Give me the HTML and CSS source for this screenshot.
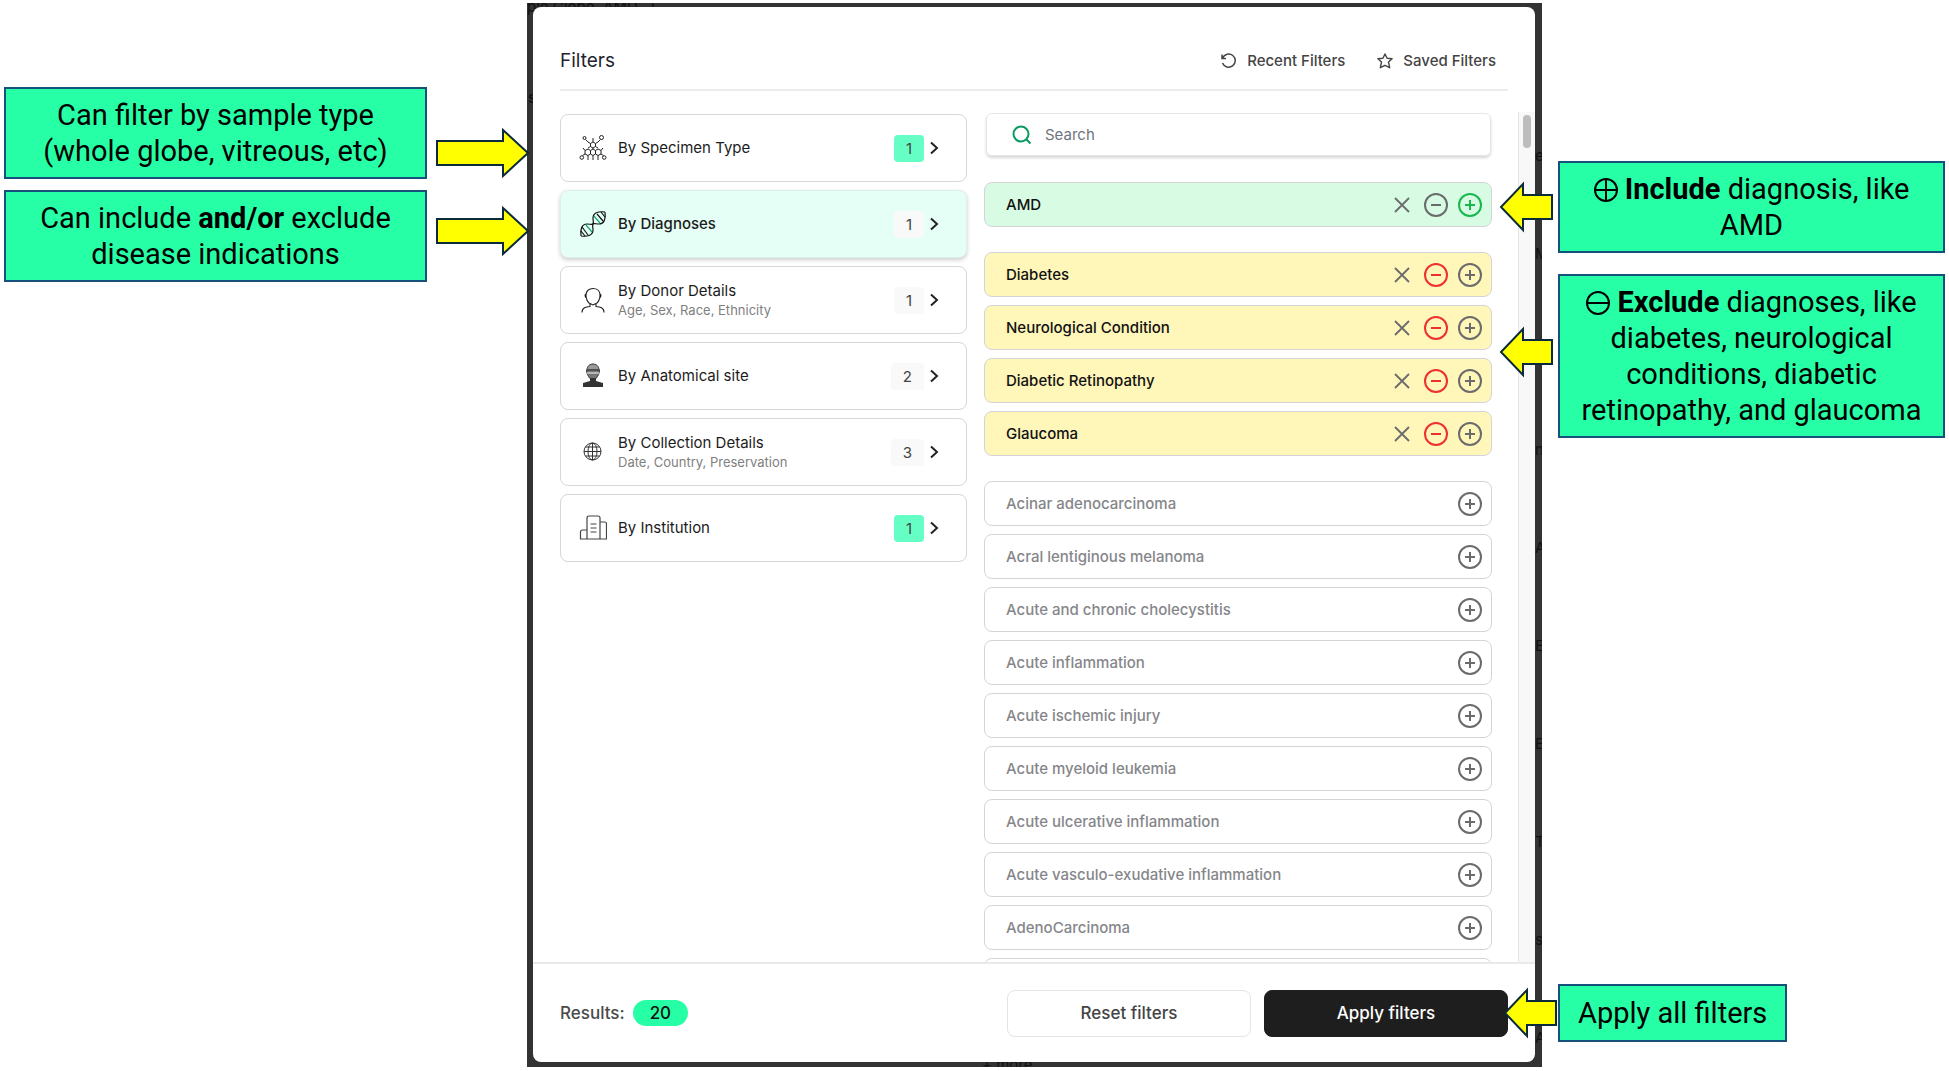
FILE: index.html
```html
<!DOCTYPE html>
<html lang="en">
<head>
<meta charset="utf-8">
<title>Filters</title>
<link rel="stylesheet" href="styles.css">
</head>
<body>
<svg class="sprite" aria-hidden="true">
  <symbol id="chevron" viewBox="0 0 12 16"><path d="M3 2.500l6 5.500-6 5.500" fill="none" stroke="#222" stroke-width="2"/></symbol>
  <symbol id="plus" viewBox="0 0 26 26"><circle cx="13" cy="13" r="11" fill="none" stroke="currentColor" stroke-width="2"/><path d="M13 8v10M8 13h10" stroke="currentColor" stroke-width="2"/></symbol>
  <symbol id="minus" viewBox="0 0 26 26"><circle cx="13" cy="13" r="11" fill="none" stroke="currentColor" stroke-width="2"/><path d="M8 13h10" stroke="currentColor" stroke-width="2"/></symbol>
  <symbol id="cross" viewBox="0 0 16 16"><path d="M1 1l14 14M15 1L1 15" stroke="currentColor" stroke-width="1.800"/></symbol>
  <symbol id="arrow-right" viewBox="0 0 97 52"><path d="M2 14h66V3l25 23-25 23V38H2z" fill="#ff0" stroke="#0b2a3c" stroke-width="2"/></symbol>
  <symbol id="arrow-left" viewBox="0 0 55 52"><path d="M53 14H24V3L2 26l22 23V38h29z" fill="#ff0" stroke="#0b2a3c" stroke-width="2"/></symbol>
</svg>
<main class="slide">
  <aside class="notes notes-left">
    <p class="note">Can filter by sample type<br>(whole globe, vitreous, etc)</p>
    <p class="note">Can include <b>and/or</b> exclude<br>disease indications</p>
    <svg class="arrow arrow-type"><use href="#arrow-right"/></svg>
    <svg class="arrow arrow-diagnoses"><use href="#arrow-right"/></svg>
  </aside>

  <div class="screen">
    <div class="behind behind-top" aria-hidden="true">ple Globe, AMD...)</div>
    <div class="behind behind-left" aria-hidden="true"><span>s</span></div>
    <div class="behind behind-right" aria-hidden="true"><span>e</span><span>M</span><span>ns</span><span>ns</span><span>A</span><span>E</span><span>E</span><span>T</span><span>si</span><span>A</span></div>
    <div class="behind behind-bottom" aria-hidden="true">+ more</div>
    <section class="dialog" role="dialog" aria-labelledby="title">
      <header class="head">
        <h1 id="title" class="title">Filters</h1>
        <div class="head-actions">
          <button class="head-button" type="button"><svg width="16" height="16" viewBox="0 0 16 16" fill="none" stroke="currentColor" stroke-width="1.500"><path d="M1 1.500v4h4M1.600 5A6.600 6.600 0 1 1 1.500 10"/></svg>Recent Filters</button>
          <button class="head-button" type="button"><svg width="16" height="16" viewBox="0 0 16 16" fill="none" stroke="currentColor" stroke-width="1.400" stroke-linejoin="round"><path d="M8 1l2.100 4.300 5 .5-3.600 3.300 1.200 5.600L8 12.300l-4.700 2.400 1.200-5.600L.9 5.800l5-.5z"/></svg>Saved Filters</button>
        </div>
      </header>

      <div class="body">
        <nav class="categories" aria-label="Filter categories">
          <button class="category" type="button">
            <svg class="category-icon" viewBox="0 0 28 28" fill="none" stroke="#222" stroke-width="1"><path d="M9 8l2.500 1.500L14 8l2.500 1.500L19 8M14 8V4M11.500 9.500v3L9 14M16.500 9.500v3L19 14M11.500 12.500L14 14l2.500-1.500M9 8L6.500 5.500M19 8l2.500-2.500M4 14l2 2.500 3-1.500 2.500 1.500L14 15l2.500 1.500L19 15l3 1.500 2-2.500M6 16.500V20l3 1.500 2.500-1.500 2.500 1.500 2.500-1.500 2.500 1.500 3-1.500v-3.500M11.500 16.500V20M16.500 16.500V20M14 14v1M9 21.500V26M14 21.500V26M19 21.500V26M6 20l-2.500 1.500M22 20l2.500 1.500"/><circle cx="5.500" cy="4" r="1.500"/><circle cx="22.500" cy="3.500" r="2"/><circle cx="2.800" cy="23.500" r="1.800"/><circle cx="25.200" cy="23.500" r="1.800"/></svg>
            <span class="category-text">By Specimen Type</span><span class="count count-on">1</span><svg class="chevron"><use href="#chevron"/></svg>
          </button>
          <button class="category category-active" type="button" aria-current="true">
            <svg class="category-icon" viewBox="0 0 28 28" fill="none" stroke="#111" stroke-width="1.200"><path d="M26 2c-7-1-12 1-12 6 0 3 1 5 0 7M26 2c1 7-1 12-6 12-3 0-5-1-7 0M2 26c7 1 12-1 12-6 0-3-1-5 0-7M2 26c-1-7 1-12 6-12 3 0 5 1 7 0"/><path d="M18 4l6 7M22 2l4 5M3 17l6 8M2 21l4 5"/><path stroke="#1aa37a" d="M15 6l6 7M7 15l6 7"/></svg>
            <span class="category-text">By Diagnoses</span><span class="count">1</span><svg class="chevron"><use href="#chevron"/></svg>
          </button>
          <button class="category" type="button">
            <svg class="category-icon" viewBox="0 0 28 28" fill="none" stroke="#222" stroke-width="1.100"><path d="M10 17c-2-2-3-4-3-8 0-4 3-6.500 7-6.500S21 5 21 9c0 4-1 6-3 8l-4 2zM7 8c-1.500 0-1 4 .5 4M21 8c1.500 0 1 4-.5 4M11 18v2.500c-4 .5-8 1-8 6M17 18v2.500c4 .5 8 1 8 6"/></svg>
            <span class="category-text">By Donor Details<small class="category-sub">Age, Sex, Race, Ethnicity</small></span><span class="count">1</span><svg class="chevron"><use href="#chevron"/></svg>
          </button>
          <button class="category" type="button">
            <svg class="category-icon" viewBox="0 0 28 28"><path d="M8 8c0-4 3-6 6-6s6 2 6 6z" fill="#999" stroke="#333"/><path d="M7.500 8h13c0 4-2 6-3 8l-3.500 2-3.500-2c-1-2-3-4-3-8z" fill="#777" stroke="#333"/><path d="M8 11h12" stroke="#ccc" stroke-width="1.500"/><path d="M11 16h6v3l7 2v4H4v-4l7-2z" fill="#333"/></svg>
            <span class="category-text">By Anatomical site</span><span class="count">2</span><svg class="chevron"><use href="#chevron"/></svg>
          </button>
          <button class="category" type="button">
            <svg class="category-icon" viewBox="0 0 28 28" fill="none" stroke="#333" stroke-width="1"><circle cx="13.500" cy="13.500" r="8.500"/><ellipse cx="13.500" cy="13.500" rx="4.500" ry="8.500"/><path d="M13.500 5v17M5 13.500h17M6.500 9h14M6.500 18h14"/></svg>
            <span class="category-text">By Collection Details<small class="category-sub">Date, Country, Preservation</small></span><span class="count">3</span><svg class="chevron"><use href="#chevron"/></svg>
          </button>
          <button class="category" type="button">
            <svg class="category-icon" viewBox="0 0 28 28" fill="none" stroke="#444" stroke-width="1.200"><path d="M8 25V4q0-2 2-2h9q2 0 2 2v21M21 8h5q1.500 0 1.500 2v15H1.500v-7q0-2 2-2H8M11.500 10h6M11.500 14h6M11.500 18h6"/></svg>
            <span class="category-text">By Institution</span><span class="count count-on">1</span><svg class="chevron"><use href="#chevron"/></svg>
          </button>
        </nav>

        <div class="results-pane">
          <label class="search"><svg width="20" height="20" viewBox="0 0 20 20" fill="none" stroke="#0a9b63" stroke-width="2"><circle cx="9" cy="9" r="7.500"/><path d="M14.500 14.500l4 4"/></svg><input class="search-input" type="search" placeholder="Search" aria-label="Search"></label>
          <ul class="group">
            <li class="option option-in">AMD<span class="tools"><button class="tool tool-x" type="button" aria-label="Clear"><svg><use href="#cross"/></svg></button><button class="tool" type="button" aria-label="Exclude"><svg><use href="#minus"/></svg></button><button class="tool tool-green" type="button" aria-label="Include"><svg><use href="#plus"/></svg></button></span></li>
          </ul>
          <ul class="group">
            <li class="option option-out">Diabetes<span class="tools"><button class="tool tool-x" type="button" aria-label="Clear"><svg><use href="#cross"/></svg></button><button class="tool tool-red" type="button" aria-label="Exclude"><svg><use href="#minus"/></svg></button><button class="tool" type="button" aria-label="Include"><svg><use href="#plus"/></svg></button></span></li>
            <li class="option option-out">Neurological Condition<span class="tools"><button class="tool tool-x" type="button" aria-label="Clear"><svg><use href="#cross"/></svg></button><button class="tool tool-red" type="button" aria-label="Exclude"><svg><use href="#minus"/></svg></button><button class="tool" type="button" aria-label="Include"><svg><use href="#plus"/></svg></button></span></li>
            <li class="option option-out">Diabetic Retinopathy<span class="tools"><button class="tool tool-x" type="button" aria-label="Clear"><svg><use href="#cross"/></svg></button><button class="tool tool-red" type="button" aria-label="Exclude"><svg><use href="#minus"/></svg></button><button class="tool" type="button" aria-label="Include"><svg><use href="#plus"/></svg></button></span></li>
            <li class="option option-out">Glaucoma<span class="tools"><button class="tool tool-x" type="button" aria-label="Clear"><svg><use href="#cross"/></svg></button><button class="tool tool-red" type="button" aria-label="Exclude"><svg><use href="#minus"/></svg></button><button class="tool" type="button" aria-label="Include"><svg><use href="#plus"/></svg></button></span></li>
          </ul>
          <ul class="group">
            <li class="option">Acinar adenocarcinoma<button class="tool" type="button" aria-label="Include"><svg><use href="#plus"/></svg></button></li>
            <li class="option">Acral lentiginous melanoma<button class="tool" type="button" aria-label="Include"><svg><use href="#plus"/></svg></button></li>
            <li class="option">Acute and chronic cholecystitis<button class="tool" type="button" aria-label="Include"><svg><use href="#plus"/></svg></button></li>
            <li class="option">Acute inflammation<button class="tool" type="button" aria-label="Include"><svg><use href="#plus"/></svg></button></li>
            <li class="option">Acute ischemic injury<button class="tool" type="button" aria-label="Include"><svg><use href="#plus"/></svg></button></li>
            <li class="option">Acute myeloid leukemia<button class="tool" type="button" aria-label="Include"><svg><use href="#plus"/></svg></button></li>
            <li class="option">Acute ulcerative inflammation<button class="tool" type="button" aria-label="Include"><svg><use href="#plus"/></svg></button></li>
            <li class="option">Acute vasculo-exudative inflammation<button class="tool" type="button" aria-label="Include"><svg><use href="#plus"/></svg></button></li>
            <li class="option">AdenoCarcinoma<button class="tool" type="button" aria-label="Include"><svg><use href="#plus"/></svg></button></li>
            <li class="option"></li>
          </ul>
        </div>
        <div class="track"><div class="thumb"></div></div>
      </div>

      <footer class="foot">
        <div class="total">Results: <span class="total-badge">20</span></div>
        <div class="foot-actions">
          <button class="action" type="button">Reset filters</button>
          <button class="action action-dark" type="button">Apply filters</button>
        </div>
      </footer>
    </section>
  </div>

  <aside class="notes notes-right">
    <p class="note"><svg class="note-icon" viewBox="0 0 24 24" fill="none" stroke="#000" stroke-width="2"><circle cx="12" cy="12" r="11"/><path d="M12 1v22M1 12h22"/></svg> <b>Include</b> diagnosis, like<br>AMD</p>
    <p class="note"><svg class="note-icon" viewBox="0 0 24 24" fill="none" stroke="#000" stroke-width="2"><circle cx="12" cy="12" r="11"/><path d="M1 12h22"/></svg> <b>Exclude</b> diagnoses, like<br>diabetes, neurological<br>conditions, diabetic<br>retinopathy, and glaucoma</p>
    <p class="note note-apply">Apply all filters</p>
    <svg class="arrow arrow-include"><use href="#arrow-left"/></svg>
    <svg class="arrow arrow-exclude"><use href="#arrow-left"/></svg>
    <svg class="arrow arrow-apply"><use href="#arrow-left"/></svg>
  </aside>
</main>
</body>
</html>
```

FILE: styles.css
```css
* { box-sizing: border-box; }
body { margin: 0; background: #fff; font-family: Inter, "Liberation Sans", sans-serif; color: #222; }
button { font: inherit; color: inherit; background: none; border: 0; padding: 0; cursor: pointer; }
ul, p, h1 { margin: 0; padding: 0; list-style: none; }
.sprite { position: absolute; width: 0; height: 0; }

.slide { display: grid; grid-template-columns: 527fr 1015fr 407fr; min-height: 100vh; padding: 3px 0 4px; }

/* Callouts */
.notes { position: relative; display: flex; flex-direction: column; font-family: Roboto, "Liberation Sans", sans-serif; font-size: 29px; line-height: 36px; color: #000; text-align: center; }
.notes-left { gap: 11px; padding: 84px 100px 0 4px; }
.notes-right { gap: 21px; padding: 158px 4px 25px 16px; }
.note { padding: 8px; border: 2px solid #15517b; background: #26ffa6; white-space: nowrap; }
.note-apply { align-self: flex-start; margin-top: auto; padding: 9px 18px; }
.note-icon { width: 24px; height: 24px; vertical-align: -3px; }
.arrow { position: absolute; z-index: 2; height: 52px; }
.notes-left .arrow { width: 97px; right: -5px; }
.notes-right .arrow { width: 55px; left: -43px; }
.arrow-type { top: 124px; }
.arrow-diagnoses { top: 202px; }
.arrow-include { top: 178px; }
.arrow-exclude { top: 323px; }
.notes-right .arrow-apply { bottom: 28px; left: -39px; }

/* Dimmed page behind the dialog */
.screen { position: relative; display: flex; min-width: 0; padding: 4px 7px 5px 6px; background: #333; overflow: hidden; }
.behind { position: absolute; color: #111; font-size: 15px; line-height: 18px; white-space: nowrap; }
.behind-top { top: -5px; left: 0; }
.behind-left { top: 86px; left: 1px; font-weight: 600; }
.behind-right { top: 144px; right: 0; bottom: 20px; width: 7px; display: flex; flex-direction: column; justify-content: space-between; }
.behind-bottom { bottom: -7px; left: 455px; }

/* Dialog */
.dialog { position: relative; flex: 1; min-width: 0; display: flex; flex-direction: column; background: #fff; border-radius: 8px; overflow: hidden; }
.head { display: flex; align-items: center; justify-content: space-between; margin: 25px 27px 0; padding: 0 12px 0 0; height: 59px; border-bottom: 2px solid #ececec; }
.title { font-size: 19px; font-weight: 400; line-height: 24px; color: #1f2430; }
.head-actions { display: flex; gap: 32px; }
.head-button { display: flex; align-items: center; gap: 10px; font-size: 15px; font-weight: 500; line-height: 20px; color: #444; }

.body { flex: 1 1 0; min-height: 0; display: flex; margin-top: 21px; overflow: hidden; }
.categories { flex: 407; display: flex; flex-direction: column; gap: 8px; margin: 2px 17px 0 27px; }
.category { display: flex; align-items: center; height: 68px; padding: 0 26px 0 18px; border: 1px solid #d6d6d6; border-radius: 8px; text-align: left; font-size: 15px; line-height: 20px; color: #1c1c1c; }
.category-active { background: #e5fff6; border-color: #dcf1ea; box-shadow: 0 2px 4px rgba(0, 0, 0, .2); font-weight: 500; }
.category-icon { width: 28px; height: 28px; margin-right: 11px; }
.category-text { flex: 1; }
.category-sub { display: block; font-size: 13px; line-height: 18px; color: #808080; }
.count { padding: 3px 12px; border-radius: 4px; background: #f9f9f9; line-height: 21px; font-weight: 400; color: #444; }
.count-on { background: #65ffc5; }
.chevron { width: 12px; height: 16px; margin-left: 4px; }

.results-pane { flex: 508; display: flex; flex-direction: column; gap: 25px; margin-right: 26px; }
.search { flex: none; display: flex; align-items: center; gap: 13px; height: 43px; margin: 1px 1px 1px 2px; padding: 0 25px; border: 1px solid #e6e6e6; border-radius: 6px; box-shadow: 0 2px 3px rgba(0, 0, 0, .16); }
.search-input { flex: 1; min-width: 0; border: 0; outline: 0; padding: 0; background: none; font: 400 15px/20px Inter, sans-serif; }
.search-input::placeholder { color: #6f7480; opacity: 1; }
.group { display: flex; flex-direction: column; gap: 8px; }
.option { display: flex; align-items: center; justify-content: space-between; height: 45px; padding: 0 8px 0 21px; border: 1px solid #d4d4d8; border-radius: 8px; font-size: 15px; font-weight: 500; line-height: 20px; color: #85868a; }
.option-in { background: #d7fbe3; color: #111; }
.option-out { background: #fff6ba; color: #111; }
.tools { display: flex; align-items: center; gap: 8px; }
.tool { width: 26px; height: 26px; color: #6b6b6b; }
.tool svg { display: block; width: 26px; height: 26px; }
.tool-x { width: 16px; height: 16px; margin-right: 5px; }
.tool-x svg { width: 16px; height: 16px; }
.tool-green { color: #18b84f; }
.tool-red { color: #f0302f; }
.track { width: 17px; padding: 3px 4px; background: #f8f8f8; border-left: 1px solid #e6e6e6; }
.thumb { height: 33px; border-radius: 4px; background: #bdbdbd; }

.foot { position: relative; display: flex; align-items: center; justify-content: space-between; height: 100px; padding: 0 27px; border-top: 2px solid #e9e9e9; }
.total { display: flex; align-items: center; gap: 8px; font-size: 17px; font-weight: 500; color: #4a4a4a; }
.total-badge { padding: 3px 17px; border-radius: 13px; background: #26ffa6; line-height: 20px; color: #111; }
.foot-actions { display: flex; gap: 13px; }
.action { width: 244px; height: 47px; border: 1px solid #e4e4e7; border-radius: 8px; font-size: 17px; font-weight: 500; color: #444; }
.action-dark { background: #1e1e1e; border-color: #1e1e1e; color: #fff; }
```
